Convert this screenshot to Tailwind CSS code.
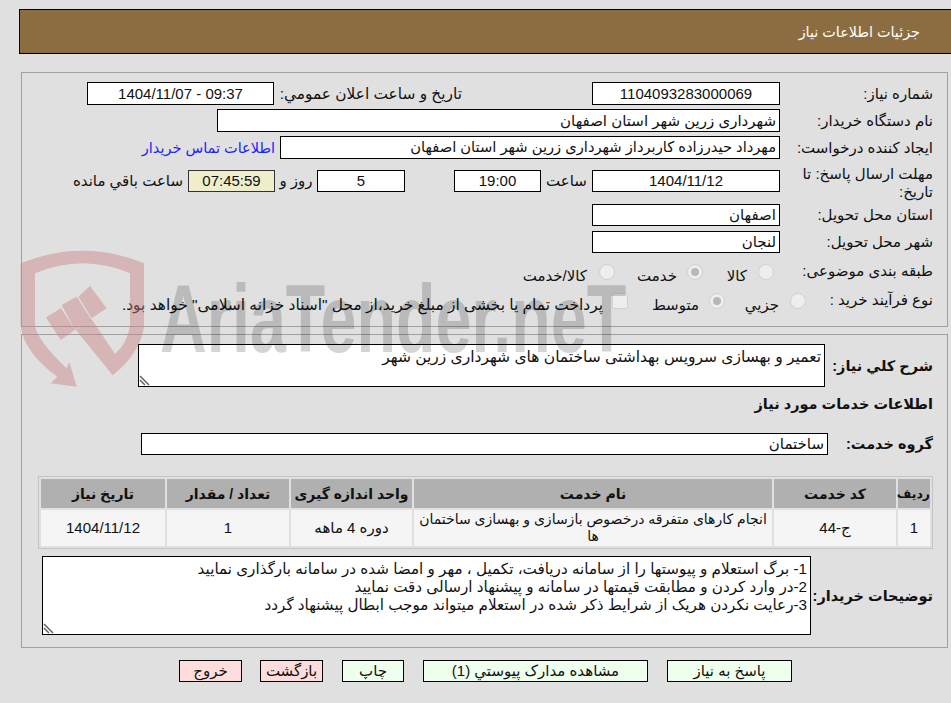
<!DOCTYPE html>
<html lang="fa" dir="rtl">
<head>
    <meta charset="UTF-8">
    <title>جزئیات اطلاعات نیاز</title>
    <script src="https://cdn.jsdelivr.net/npm/@tailwindcss/browser@4"></script>
</head>
<body class="bg-[#e0e0e0] text-[15px] leading-[18px] text-[#111] font-['Liberation_Sans','DejaVu_Sans',sans-serif] w-[951px] h-[703px] overflow-hidden relative">

    <!-- Header -->
    <div class="mt-[9px] h-[45px] ml-[19px] bg-[#8c6d42] border-y border-l border-black flex items-center pr-[31px] text-white text-[14.4px]">جزئیات اطلاعات نیاز</div>

    <!-- Panel 1 -->
    <div class="mt-[18px] mr-[3px] ml-[21px] h-[255px] border border-[#a0a0a0] pr-[14px] pt-[9px]">
        <div class="flex items-center h-[23px] mb-[4px]">
            <div class="w-[153px] shrink-0">شماره نیاز:</div>
            <div class="w-[188px] h-[23px] leading-[21px] shrink-0 bg-white border border-black text-center">1104093283000069</div>
            <div class="w-[188px] shrink-0 mr-[130px] whitespace-nowrap text-[15.4px]">تاریخ و ساعت اعلان عمومي:</div>
            <div class="w-[187px] h-[23px] leading-[21px] shrink-0 bg-white border border-black text-center">09:37 - 1404/11/07</div>
        </div>
        <div class="flex items-center h-[23px] mb-[4px]">
            <div class="w-[153px] shrink-0">نام دستگاه خریدار:</div>
            <div class="w-[563px] h-[23px] leading-[21px] bg-white border border-black pr-[3px]">شهرداری زرین شهر استان اصفهان</div>
        </div>
        <div class="flex items-center h-[23px] mb-[11px]">
            <div class="w-[153px] shrink-0">ایجاد کننده درخواست:</div>
            <div class="w-[500px] h-[23px] leading-[21px] bg-white border border-black pr-[3px] text-[14.7px]">مهرداد حیدرزاده کاربرداز شهرداری زرین شهر استان اصفهان</div>
            <a class="text-[#2222ff] mr-[5px] whitespace-nowrap text-[14.5px]">اطلاعات تماس خریدار</a>
        </div>
        <div class="flex items-start h-[34px]">
            <div class="w-[153px] shrink-0 -mt-[5px]">مهلت ارسال پاسخ: تا تاریخ:</div>
            <div class="w-[188px] h-[22px] leading-[20px] bg-white border border-black text-center">1404/11/12</div>
            <div class="w-[51px] text-center h-[22px] leading-[22px]">ساعت</div>
            <div class="w-[87px] h-[22px] leading-[20px] bg-white border border-black text-center">19:00</div>
            <div class="w-[49px]"></div>
            <div class="w-[88px] h-[22px] leading-[20px] bg-white border border-black text-center">5</div>
            <div class="w-[42px] text-center h-[22px] leading-[22px]">روز و</div>
            <div class="w-[87px] h-[22px] leading-[20px] bg-[#eeeecc] border border-[#333] text-center">07:45:59</div>
            <div class="mr-[5px] h-[22px] leading-[22px] whitespace-nowrap">ساعت باقي مانده</div>
        </div>
        <div class="flex items-center h-[22px] mb-[5px]">
            <div class="w-[153px] shrink-0">استان محل تحویل:</div>
            <div class="w-[188px] h-[22px] leading-[20px] bg-white border border-black pr-[3px]">اصفهان</div>
        </div>
        <div class="flex items-center h-[22px] mb-[9px]">
            <div class="w-[153px] shrink-0">شهر محل تحویل:</div>
            <div class="w-[188px] h-[22px] leading-[20px] bg-white border border-black pr-[3px]">لنجان</div>
        </div>
        <div class="flex h-[20px] mb-[9px]">
            <div class="w-[153px] shrink-0">طبقه بندی موضوعی:</div>
            <div class="flex items-center w-[77px] pt-[8px] pr-[6px]"><span class="size-[16px] shrink-0 rounded-full bg-[#eeeeee] border border-[#d0d0d0] ml-[11px] -mt-[8px]"></span>کالا</div>
            <div class="flex items-center w-[88px] pt-[8px]"><span class="size-[16px] shrink-0 rounded-full bg-[#eeeeee] border border-[#d0d0d0] ml-[10px] -mt-[8px] flex items-center justify-center"><span class="size-[8px] rounded-full bg-[#b8b8b8]"></span></span>خدمت</div>
            <div class="flex items-center pt-[8px]"><span class="size-[16px] shrink-0 rounded-full bg-[#eeeeee] border border-[#d0d0d0] ml-[12px] -mt-[8px]"></span>کالا/خدمت</div>
        </div>
        <div class="flex h-[20px]">
            <div class="w-[127px] shrink-0">نوع فرآیند خرید :</div>
            <div class="flex items-center w-[81px] pt-[8px]"><span class="size-[16px] shrink-0 rounded-full bg-[#eeeeee] border border-[#d0d0d0] ml-[11px] -mt-[8px]"></span>جزیي</div>
            <div class="flex items-center w-[97px] pt-[8px]"><span class="size-[16px] shrink-0 rounded-full bg-[#eeeeee] border border-[#d0d0d0] ml-[10px] -mt-[8px] flex items-center justify-center"><span class="size-[8px] rounded-full bg-[#b8b8b8]"></span></span>متوسط</div>
            <div class="flex items-center pt-[8px] whitespace-nowrap text-[15.45px]"><span class="size-[16px] shrink-0 rounded-[3px] bg-[#eeeeee] border border-[#d0d0d0] ml-[9px] -mt-[8px]"></span>پرداخت تمام یا بخشی از مبلغ خرید،از محل "اسناد خزانه اسلامی" خواهد بود.</div>
        </div>
    </div>

    <!-- Panel 2 -->
    <div class="mt-[7px] mr-[3px] ml-[21px] h-[314px] border border-[#a0a0a0] pr-[14px] pt-[9px]">
        <div class="flex items-center h-[43px]">
            <div class="w-[108px] shrink-0 font-bold text-[14.5px] whitespace-nowrap">شرح کلي نیاز:</div>
            <div class="w-[687px] h-[43px] bg-white border border-black pr-[3px] pt-[3px] relative text-[15.5px]">تعمیر و بهسازی سرویس بهداشتی ساختمان های شهرداری زرین شهر
                <svg class="absolute left-0 bottom-0" width="11" height="11" viewBox="0 0 11 11"><path d="M1 1 L10 10 M1 5 L6 10" stroke="#666" stroke-width="1.5"/></svg>
            </div>
        </div>
        <div class="font-bold text-[14.5px] mt-[8px] h-[18px]">اطلاعات خدمات مورد نیاز</div>
        <div class="flex items-center h-[22px] mt-[20px]">
            <div class="w-[105px] shrink-0 font-bold text-[14.5px]">گروه خدمت:</div>
            <div class="w-[687px] h-[22px] leading-[20px] bg-white border border-black pr-[3px]">ساختمان</div>
        </div>

        <!-- Table -->
        <div class="mt-[21px] w-[895px] border border-[#c4c4c4]">
            <table class="w-full table-fixed border-separate border-spacing-[2px] text-center">
                <thead>
                    <tr class="bg-[#b0b0b0] h-[29px] text-[14px]">
                        <th class="w-[32px] p-0 text-[12.5px] whitespace-nowrap">ردیف</th>
                        <th class="w-[122px] p-0">کد خدمت</th>
                        <th class="p-0">نام خدمت</th>
                        <th class="w-[121px] p-0 whitespace-nowrap">واحد اندازه گیری</th>
                        <th class="w-[122px] p-0">تعداد / مقدار</th>
                        <th class="w-[124px] p-0">تاریخ نیاز</th>
                    </tr>
                </thead>
                <tbody>
                    <tr class="bg-[#f5f5f5] h-[36px]">
                        <td class="p-0">1</td>
                        <td class="p-0">ج-44</td>
                        <td class="py-0 px-[4px] leading-[17px] text-[14px]">انجام کارهای متفرقه درخصوص بازسازی و بهسازی ساختمان ها</td>
                        <td class="p-0">دوره 4 ماهه</td>
                        <td class="p-0">1</td>
                        <td class="p-0">1404/11/12</td>
                    </tr>
                </tbody>
            </table>
        </div>

        <div class="flex items-center h-[79px] mt-[7px]">
            <div class="w-[122px] shrink-0 font-bold text-[14.5px] whitespace-nowrap">توضیحات خریدار:</div>
            <div class="w-[769px] h-[79px] bg-white border border-black pr-[3px] relative pt-[3px] text-[15.2px]">
                <div>1- برگ استعلام و پیوستها را از سامانه دریافت، تکمیل ، مهر و امضا شده در سامانه بارگذاری نمایید</div>
                <div>2-در وارد کردن و مطابقت قیمتها در سامانه و پیشنهاد ارسالی دقت نمایید</div>
                <div>3-رعایت نکردن هریک از شرایط  ذکر شده در استعلام میتواند موجب ابطال پیشنهاد گردد</div>
                <svg class="absolute left-0 bottom-0" width="11" height="11" viewBox="0 0 11 11"><path d="M1 1 L10 10 M1 5 L6 10" stroke="#666" stroke-width="1.5"/></svg>
            </div>
        </div>
    </div>

    <!-- Buttons -->
    <div class="flex mt-[12px] mr-[159px] h-[22px]">
        <button class="w-[125px] h-[22px] bg-[#eeffee] border border-black">پاسخ به نیاز</button>
        <button class="w-[225px] h-[22px] bg-[#eeffee] border border-black mr-[19px]">مشاهده مدارک پیوستي (1)</button>
        <button class="w-[62px] h-[22px] bg-[#eeffee] border border-black mr-[19px]">چاپ</button>
        <button class="w-[63px] h-[22px] bg-[#ffdddd] border border-black mr-[19px]">بازگشت</button>
        <button class="w-[63px] h-[22px] bg-[#ffdddd] border border-black mr-[18px]">خروج</button>
    </div>

    <!-- Watermark -->
    <div dir="ltr" class="absolute left-0 top-[240px] w-[650px] h-[160px] pointer-events-none">
        <svg class="absolute left-0 top-0" width="160" height="160" viewBox="0 30 480 480">
            <g fill="#c88080" fill-opacity=".45">
                <path fill-rule="evenodd" d="M62 100 Q250 24 432 100 L432 290 Q420 370 338 436 L228 300 L275 268 L345 372 Q385 335 390 285 L390 130 Q250 70 105 130 L105 290 Q120 340 200 415 L208 395 L230 470 L152 460 L172 440 Q75 370 62 290 Z"/>
                <path d="M235 200 L270 168 L320 235 L275 265 Z M185 225 L230 200 L275 270 L225 300 Z M138 262 L183 235 L225 300 L182 330 Z"/>
            </g>
        </svg>
        <div class="absolute left-[160px] top-[29px] text-[96px] leading-[100px] font-bold text-black/[0.17] font-['Liberation_Sans',sans-serif] origin-left scale-x-[0.674] whitespace-nowrap">AriaTender.neT</div>
    </div>
</body>
</html>
